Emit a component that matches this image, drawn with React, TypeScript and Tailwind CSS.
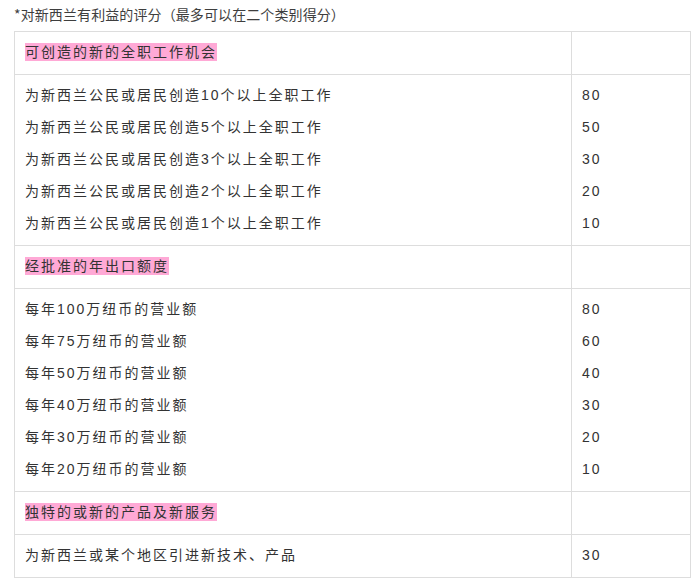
const groups = [
	{
		title: '可创造的新的全职工作机会',
		rows: [
			['为新西兰公民或居民创造10个以上全职工作', '80'],
			['为新西兰公民或居民创造5个以上全职工作', '50'],
			['为新西兰公民或居民创造3个以上全职工作', '30'],
			['为新西兰公民或居民创造2个以上全职工作', '20'],
			['为新西兰公民或居民创造1个以上全职工作', '10'],
		],
	},
	{
		title: '经批准的年出口额度',
		rows: [
			['每年100万纽币的营业额', '80'],
			['每年75万纽币的营业额', '60'],
			['每年50万纽币的营业额', '40'],
			['每年40万纽币的营业额', '30'],
			['每年30万纽币的营业额', '20'],
			['每年20万纽币的营业额', '10'],
		],
	},
	{
		title: '独特的或新的产品及新服务',
		rows: [['为新西兰或某个地区引进新技术、产品', '30']],
	},
];

const cell = 'border border-[#dddddd] px-[10px] pt-[4px] pb-[6px] align-top';

export default function App() {
	return (
		<div className="min-h-[587px] bg-white text-[#333333] font-['Liberation_Sans','Noto_Sans_CJK_SC',sans-serif]">
			<p className="h-[31px] pl-[14px] font-['Noto_Sans_CJK_SC',sans-serif] text-[14px] leading-[28px] tracking-[0.1px] text-[#3e3e3e]">
				*对新西兰有利益的评分（最多可以在二个类别得分）
			</p>
			<table className="ml-[14px] w-[677px] border-collapse text-[14px] tracking-[2px]">
				<colgroup>
					<col className="w-[557px]" />
					<col />
				</colgroup>
				<tbody>
					{groups.map((group) => (
						<GroupRows key={group.title} title={group.title} rows={group.rows} />
					))}
				</tbody>
			</table>
		</div>
	);
}

function GroupRows({ title, rows }: { title: string; rows: string[][] }) {
	return (
		<>
			<tr>
				<td className={cell}>
					<div className="flex h-[32px] items-center">
						<span className="inline-block h-[18px] bg-[#ffa9d6] leading-[18px]">{title}</span>
					</div>
				</td>
				<td className={cell} />
			</tr>
			<tr>
				<td className={cell}>
					{rows.map((row) => (
						<p key={row[0]} className="leading-[32px]">
							{row[0]}
						</p>
					))}
				</td>
				<td className={cell}>
					{rows.map((row) => (
						<p key={row[0]} className="leading-[32px]">
							{row[1]}
						</p>
					))}
				</td>
			</tr>
		</>
	);
}
